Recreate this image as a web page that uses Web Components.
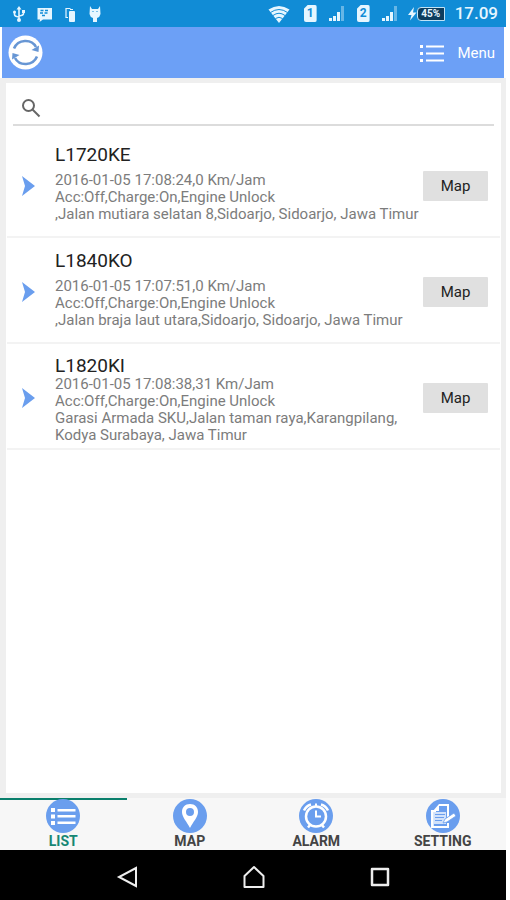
<!DOCTYPE html>
<html lang="id">
<head>
<meta charset="utf-8">
<meta name="viewport" content="width=device-width, initial-scale=1">
<title>Vehicle list</title>
<style>
html, body { height: 100%; margin: 0; background: #fff; }
</style>
</head>
<body>
<tracker-app></tracker-app>
<script>
const define = (name, html) => {
  const template = document.createElement('template');
  template.innerHTML = html;
  customElements.define(name, class extends HTMLElement {
    constructor() {
      super();
      this.attachShadow({ mode: 'open' }).append(template.content.cloneNode(true));
    }
  });
};

define('status-bar', `
<style>
  :host { display: flex; align-items: center; height: 27px; padding: 0 8px 0 10px; background: #118cd6; color: #e6f6ff; }
  svg { display: block; flex: none; }
  .left, .right, .sims, .power { display: flex; align-items: center; }
  .left { flex: 1; gap: 8px; }
  .right { gap: 10px; }
  .sims { gap: 12px; margin-left: 4px; }
  .sim { display: grid; place-items: center; width: 13px; height: 17px; background: #e6f6ff; color: #118cd6; font: bold 12px/17px Roboto, sans-serif; border-radius: 2px; clip-path: polygon(4px 0, 100% 0, 100% 100%, 0 100%, 0 4px); }
  .battery { display: grid; place-items: center; width: 28px; height: 14px; box-sizing: border-box; border: 1px solid #bfe3f6; border-radius: 4px 0 0 4px; background: #0d3d5d; font: bold 10px/12px Roboto, sans-serif; }
  time { font: 500 17px/27px Roboto, sans-serif; }
</style>
<div class="left">
  <svg width="18" height="18" viewBox="0 0 18 18" fill="none" stroke="currentColor" stroke-width="1.6"><path d="M9 3v12M4.500 7v2.500q0 2 4.500 2.500M13.500 6v2.500q0 2-4.500 2.500"/><path d="M6.500 4.500 9 1l2.500 3.500z" fill="currentColor" stroke="none"/><circle cx="4.500" cy="7" r="1.500" fill="currentColor" stroke="none"/><path d="M12 5h3v3h-3z" fill="currentColor" stroke="none"/><circle cx="9" cy="15" r="2" fill="currentColor" stroke="none"/></svg>
  <svg width="17" height="18" viewBox="0 0 17 18"><path fill="currentColor" d="M1.500 3h14.500v11.500H7L3.500 17 4 14.500H1.500z"/><path d="M4.500 5.500h3M9 5.500h3M4 8h3M8.500 8h3M6 10.500h3" stroke="#118cd6" stroke-width="1.500"/></svg>
  <svg width="17" height="18" viewBox="0 0 17 18"><path d="M9.500 3.500H5v9h2" fill="none" stroke="currentColor" stroke-width="1.200"/><rect x="8" y="6" width="6" height="11" rx="1" fill="currentColor"/><path d="M9 4h3v1H9z" fill="currentColor"/></svg>
  <svg width="18" height="18" viewBox="0 0 18 18"><path d="M4 1 6 4h6l2-3 .5 8q-.500 3-3.500 4v4H7v-4Q4 12 3.500 9z" fill="currentColor"/><path d="M6.500 6.500h1M10.500 6.500h1" stroke="#118cd6" stroke-width="1.200"/></svg>
</div>
<div class="right">
  <svg width="22" height="20" viewBox="0 0 22 20"><path d="M.5 5.500q10.500-7 21 0L11 19z" fill="currentColor"/><path d="M2.500 8.500q8.500-6 17 0M5 11.500q6-4.500 12 0M7.500 14.500q3.500-2.500 7 0" fill="none" stroke="#118cd6" stroke-width="1"/></svg>
  <div class="sims">
    <span class="sim">1</span>
    <svg width="16" height="17" viewBox="0 0 16 17"><path d="M0 16v-3h3v3zM4 16v-5h3v5zM8 16V7h3v9z" fill="currentColor"/><path d="M12 16V1h3v15z" fill="currentColor" opacity=".4"/></svg>
    <span class="sim">2</span>
    <svg width="16" height="17" viewBox="0 0 16 17"><path d="M0 16v-3h3v3zM4 16v-5h3v5zM8 16V7h3v9z" fill="currentColor"/><path d="M12 16V1h3v15z" fill="currentColor" opacity=".4"/></svg>
  </div>
  <div class="power">
    <svg width="9" height="14" viewBox="0 0 9 14"><path d="M6 0 0 8h3.500L2 13.500 8.500 5.500H5z" fill="currentColor"/></svg>
    <span class="battery">45%</span>
  </div>
  <time>17.09</time>
</div>`);

define('app-header', `
<style>
  :host { display: flex; align-items: center; justify-content: space-between; height: 51px; padding: 0 9px 0 6px; margin: 0 2px; background: #6ca0f6; color: #fff; box-sizing: border-box; }
  button { display: flex; align-items: center; gap: 12px; padding: 0; border: 0; background: none; color: inherit; font: 15px/20px Roboto, sans-serif; }
  svg { display: block; }
</style>
<button type="button" aria-label="Refresh"><svg width="35" height="35" viewBox="0 0 35 35"><circle cx="17.500" cy="17.500" r="17" fill="#fff"/><g fill="none" stroke="#6796d4" stroke-width="2.600"><path d="M6 13.500C10 4 23.500 3.500 28 12"/><path d="M29 21.500C25 31 11.500 31.500 7 23"/></g><path d="M31 10.500 30.500 17 23.500 15zM4 24.500 4.500 18l7 2z" fill="#6796d4"/></svg></button>
<button type="button"><svg width="26" height="18" viewBox="0 0 26 18" fill="#fff"><path d="M1 1h3v3H1zM1 8h3v3H1zM1 15h3v3H1zM7 1.500h18v2H7zM7 8.500h18v2H7zM7 15.500h18v2H7z"/></svg>Menu</button>`);

define('search-box', `
<style>
  :host { display: block; padding: 0 6px; }
  label { display: flex; align-items: center; gap: 8px; height: 42px; padding: 8px 8px 0; box-sizing: border-box; border-bottom: 2px solid #dcdcdc; }
  input { flex: 1; min-width: 0; border: 0; outline: 0; background: none; font: 16px/24px Roboto, sans-serif; }
</style>
<label><svg width="20" height="20" viewBox="0 0 20 20" fill="none" stroke="#666" stroke-width="2"><circle cx="7.500" cy="7.500" r="5.500"/><path d="m11.500 11.500 7 7"/></svg><input type="search" aria-label="Search"></label>`);

define('vehicle-row', `
<style>
  :host { display: flex; align-items: center; height: 106px; padding: 4px 12px 0 14px; box-sizing: border-box; border-bottom: 2px solid #f3f3f3; font-family: Roboto, sans-serif; }
  svg { flex: none; margin-right: 20px; }
  .text { flex: 1; min-width: 0; padding-bottom: 5px; }
  h2 { margin: 0 0 6px; font: 19px/22px Roboto, sans-serif; color: #222; }
  p { margin: 0; font: 15px/17px Roboto, sans-serif; color: #7c7c7c; white-space: pre-line; }
  :host([dense]) .text { padding: 4px 0 0; }
  :host([dense]) h2 { margin: 0; line-height: 20px; }
  button { flex: none; width: 65px; height: 30px; padding: 0; border: 0; border-radius: 1px; background: #e0e0e0; color: #222; font: 15px/30px Roboto, sans-serif; }
</style>
<svg width="14" height="20" viewBox="0 0 14 20"><path d="M1 0 14 10 1 20 4 10z" fill="#6a9eee"/></svg>
<div class="text"><h2><slot name="title"></slot></h2><p><slot></slot></p></div>
<button type="button">Map</button>`);

define('tab-item', `
<style>
  :host { flex: 1; display: block; padding-top: 1px; }
  :host([active]) { box-shadow: inset 0 2px #0a7f6c; }
  a { display: flex; flex-direction: column; align-items: center; color: #444; font: bold 14px/16px Roboto, sans-serif; text-decoration: none; }
  :host([active]) a { color: #168774; }
  ::slotted(svg) { display: block; }
</style>
<a href="#"><slot name="icon"></slot><slot></slot></a>`);

define('system-nav', `
<style>
  :host { display: flex; justify-content: center; gap: 98px; height: 50px; align-items: center; padding: 3px 0 0 2px; box-sizing: border-box; background: #000; }
  button { display: block; padding: 0; border: 0; background: none; }
  svg { display: block; }
</style>
<button type="button" aria-label="Back"><svg width="28" height="24" viewBox="0 0 28 24" fill="none" stroke="#eee" stroke-width="2"><path d="M22 3v18L5 12z"/></svg></button>
<button type="button" aria-label="Home"><svg width="28" height="24" viewBox="0 0 28 24" fill="none" stroke="#eee" stroke-width="2" stroke-linejoin="round"><path d="M4.500 22V11L14 2l9.500 9v11z"/></svg></button>
<button type="button" aria-label="Recent apps"><svg width="28" height="24" viewBox="0 0 28 24" fill="none" stroke="#eee" stroke-width="2.500" stroke-linejoin="round"><rect x="6" y="4" width="16" height="16"/></svg></button>`);

define('tracker-app', `
<style>
  :host { display: flex; flex-direction: column; min-height: 100%; margin-right: 4px; font-family: Roboto, sans-serif; }
  main { flex: 1; display: flex; flex-direction: column; padding: 5px 5px 5px 6px; background: #efefef; }
  section { flex: 1; padding: 1px; background: #fff; }
  search-box { margin-bottom: 6px; }
  nav { display: flex; height: 52px; background: #f7f7f7; }
</style>
<status-bar></status-bar>
<app-header></app-header>
<main><section>
  <search-box></search-box>
  <vehicle-row><span slot="title">L1720KE</span>2016-01-05 17:08:24,0 Km/Jam
Acc:Off,Charge:On,Engine Unlock
,Jalan mutiara selatan 8,Sidoarjo, Sidoarjo, Jawa Timur</vehicle-row>
  <vehicle-row><span slot="title">L1840KO</span>2016-01-05 17:07:51,0 Km/Jam
Acc:Off,Charge:On,Engine Unlock
,Jalan braja laut utara,Sidoarjo, Sidoarjo, Jawa Timur</vehicle-row>
  <vehicle-row dense><span slot="title">L1820KI</span>2016-01-05 17:08:38,31 Km/Jam
Acc:Off,Charge:On,Engine Unlock
Garasi Armada SKU,Jalan taman raya,Karangpilang, Kodya Surabaya, Jawa Timur</vehicle-row>
</section></main>
<nav>
  <tab-item active><svg slot="icon" width="34" height="34" viewBox="0 0 34 34"><circle cx="17" cy="17" r="17" fill="#6a9eee"/><path d="M5 9h4v4H5zM5 15.500h4v4H5zM5 22h4v4H5zM11.500 10h18v2.500h-18zM11.500 16h18v2.500h-18zM11.500 22.500h18V25h-18z" fill="#fff"/></svg>LIST</tab-item>
  <tab-item><svg slot="icon" width="34" height="34" viewBox="0 0 34 34"><circle cx="17" cy="17" r="17" fill="#6a9eee"/><path fill-rule="evenodd" d="M17 5c5 0 8 3.500 8 8 0 5-5 10-8 16-3-6-8-11-8-16 0-4.500 3-8 8-8zm0 4a4 4 0 1 0 0 8 4 4 0 0 0 0-8z" fill="#fff"/></svg>MAP</tab-item>
  <tab-item><svg slot="icon" width="34" height="34" viewBox="0 0 34 34"><circle cx="17" cy="17" r="17" fill="#6a9eee"/><g fill="none" stroke="#fff"><circle cx="17" cy="17.500" r="10" stroke-width="2.500"/><path stroke-width="2" d="M17 11.500v6h5"/><path stroke-width="2.500" d="m11.500 25.500-2.500 3M22.500 25.500l2.500 3"/><path stroke-width="2.500" d="M5 11.500Q7 7 12 5.500M29 11.500Q27 7 22 5.500"/><path stroke-width="2" d="M17 4.500v3"/></g></svg>ALARM</tab-item>
  <tab-item><svg slot="icon" width="34" height="34" viewBox="0 0 34 34"><circle cx="17" cy="17" r="17" fill="#6a9eee"/><g fill="none" stroke="#fff" stroke-width="2"><path d="M13 6h9v12M22 24v4H6V12h4"/><path d="M7 28V13" stroke-width="1.500"/></g><path d="M13 5v7H7z" fill="#fff"/><path d="M8 13h12v12H8z" fill="#fff" opacity=".7"/><path d="M9 15.500h10M9 18.500h9M9 21.500h7" stroke="#6a9eee" stroke-width="1.200"/><path d="m17 24 2-4 9-6 2 3-9 6z" fill="#fff" stroke="#6a9eee" stroke-width=".8"/></svg>SETTING</tab-item>
</nav>
<system-nav></system-nav>`);
</script>
</body>
</html>
